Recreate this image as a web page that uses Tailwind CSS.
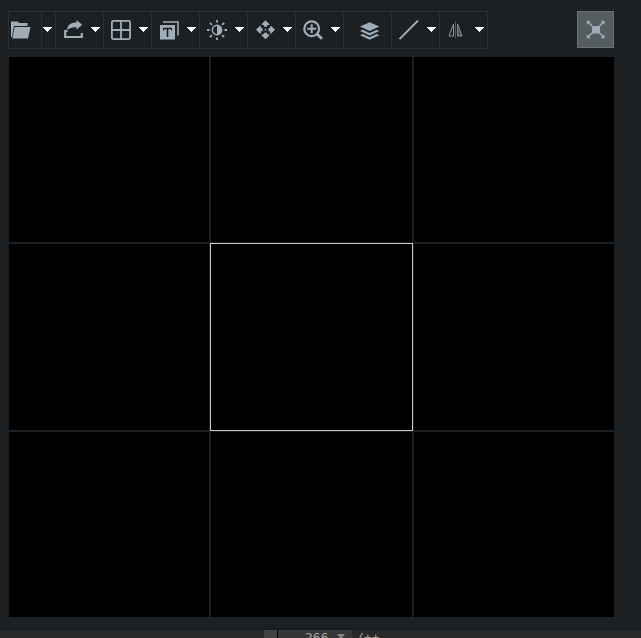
<!DOCTYPE html>
<html lang="en">
<head>
<meta charset="utf-8">
<title>Viewer</title>
<script src="https://cdn.jsdelivr.net/npm/@tailwindcss/browser@4"></script>
</head>
<body class="w-[641px] h-[638px] overflow-hidden bg-[#1c2023] flex flex-col text-[#9fadb8]">
<svg class="hidden"><defs><symbol id="caret" viewBox="0 0 9 5"><path fill="#fff" shape-rendering="crispEdges" d="M0 0h9v1h-1v1h-1v1h-1v1h-1v1h-1v-1h-1v-1h-1v-1h-1v-1h-1z"/></symbol></defs></svg>
<header class="h-[57px] pt-[11px] pl-2 pr-[27px] flex items-start justify-between shrink-0">
  <div class="flex h-[38px] border border-[#2b2f32]">
    <button class="w-[33px] border-r border-[#2b2f32] flex items-center pl-[2px]">
      <svg class="w-5 h-5" viewBox="0 0 20 20" fill="currentColor"><path d="M0 17V1.500h7l1 1.500h8.500v3H3L1 17z"/><path d="M3.700 7H19.500L17 18.500H1.300z"/></svg>
    </button>
    <button class="w-[14px] border-r border-[#2b2f32] flex items-center pl-px"><svg class="w-[9px] h-[5px] mb-px"><use href="#caret"/></svg></button>
    <button class="w-12 border-r border-[#2b2f32] flex items-center gap-[6px] pl-[7px]">
      <svg class="w-[22px] h-5" viewBox="0 0 22 20" fill="currentColor"><path d="M4.500 11H2.200v6h16.600V13" fill="none" stroke="currentColor" stroke-width="2.200"/><path d="M4 10C4.500 4.500 8 2.600 13.500 2.600V0l5.700 4.700-5.700 5V7.300C9.500 7 7 8 4 10z"/></svg>
      <svg class="w-[9px] h-[5px] mb-px"><use href="#caret"/></svg>
    </button>
    <button class="w-12 border-r border-[#2b2f32] flex items-center gap-[7px] pl-[7px]">
      <svg class="w-[21px] h-5" viewBox="0 0 21 20" fill="none" stroke="currentColor" stroke-width="1.800"><rect x="0.900" y="0.900" width="18.200" height="18.200" rx="1.500"/><path d="M10 1v18M1 10h18"/></svg>
      <svg class="w-[9px] h-[5px] mb-px"><use href="#caret"/></svg>
    </button>
    <button class="w-12 border-r border-[#2b2f32] flex items-center gap-[7px] pl-[7px]">
      <svg class="w-[21px] h-5" viewBox="0 0 21 20"><path d="M4 2h15v13.500" fill="none" stroke="currentColor" stroke-width="1.600"/><rect x="1" y="5" width="15" height="14.500" fill="currentColor"/><path d="M4 8.500h9M8.500 8.500v8.500" fill="none" stroke="#1c2023" stroke-width="1.600"/><path d="M4.500 8v2.500M12.500 8v2.500" stroke="#1c2023"/></svg>
      <svg class="w-[9px] h-[5px] mb-px"><use href="#caret"/></svg>
    </button>
    <button class="w-12 border-r border-[#2b2f32] flex items-center gap-[7px] pl-[7px]">
      <svg class="w-[21px] h-5" viewBox="0 0 21 20"><circle cx="10" cy="10" r="4.700" fill="none" stroke="currentColor" stroke-width="1.400"/><path d="M10 5a5 5 0 0 1 0 10z" fill="currentColor"/><path d="M10 0v2.500M10 17.500v2.500M0 10h2.500M17.500 10H20M2.900 2.900l2 2M15.100 15.100l2 2M2.900 17.100l2-2M15.100 4.900l2-2" stroke="currentColor" stroke-width="1.800"/></svg>
      <svg class="w-[9px] h-[5px] mb-px"><use href="#caret"/></svg>
    </button>
    <button class="w-12 border-r border-[#2b2f32] flex items-center gap-[7px] pl-[7px]">
      <svg class="w-[21px] h-5" viewBox="0 0 21 20" fill="currentColor"><path id="arm" d="M10.500 .2L14.300 4v1.100H12.100V6.700H8.900V5.100H6.700V4z"/><use href="#arm" transform="rotate(90 10.500 9.700)"/><use href="#arm" transform="rotate(180 10.500 9.700)"/><use href="#arm" transform="rotate(270 10.500 9.700)"/><rect x="9.700" y="8.900" width="1.600" height="1.600"/></svg>
      <svg class="w-[9px] h-[5px] mb-px"><use href="#caret"/></svg>
    </button>
    <button class="w-12 border-r border-[#2b2f32] flex items-center gap-[7px] pl-[7px]">
      <svg class="w-[21px] h-5" viewBox="0 0 21 20" fill="none" stroke="currentColor"><circle cx="8.700" cy="8.700" r="7.400" stroke-width="2.200"/><path d="M8.700 4.200v9M4.200 8.700h9" stroke-width="2"/><path d="M14 14l5 4.700" stroke-width="2.800"/></svg>
      <svg class="w-[9px] h-[5px] mb-px"><use href="#caret"/></svg>
    </button>
    <button class="w-12 border-r border-[#2b2f32] flex items-center pl-4">
      <svg class="w-[20px] h-5" viewBox="0 0 20 20" fill="currentColor"><path d="M9.700 2.300L19.300 6.500 9.700 11 0 6.500z"/><path d="M0 11l2.700-1.200 7 3.200 7-3.200L19.300 11l-9.600 4.500z"/><path d="M0 15.200l2.700-1.200 7 3.200 7-3.200L19.300 15.200l-9.600 4.500z"/></svg>
    </button>
    <button class="w-12 border-r border-[#2b2f32] flex items-center gap-[7px] pl-[7px]">
      <svg class="w-[21px] h-5" viewBox="0 0 21 20"><path d="M.5 19L19 .5" stroke="currentColor" stroke-width="1.900"/></svg>
      <svg class="w-[9px] h-[5px] mb-px"><use href="#caret"/></svg>
    </button>
    <button class="w-[47px] flex items-center gap-[7px] pl-[7px]">
      <svg class="w-[21px] h-5" viewBox="0 0 21 20"><path d="M6.500 4v12H2z" fill="none" stroke="#89939a"/><path d="M10.500 4v12h4.600z" fill="#50585d" stroke="#7d878e"/><path d="M8.500 1.500v17" stroke="#555c60"/></svg>
      <svg class="w-[9px] h-[5px] mb-px"><use href="#caret"/></svg>
    </button>
  </div>
  <button class="w-[37px] h-[37px] bg-[#545c5f] border border-[#697174] flex items-center justify-center">
    <svg class="w-[19px] h-[19px]" viewBox="0 0 19 19" fill="currentColor"><rect x="6" y="6" width="8" height="7.500"/><path d="M2 2l4 4M17.500 2l-4 4M2 17l4-4M17.500 17l-4-4" stroke="currentColor" stroke-width="1.600"/><path d="M.8.800h4l-4 4zM18.700.800h-4l4 4zM.8 18.200v-4l4 4zM18.700 18.200v-4l-4 4z"/></svg>
  </button>
</header>
<main class="ml-[9px] w-[605px] h-[560px] shrink-0 grid grid-cols-[200px_201px_200px] grid-rows-[185px_186px_185px] gap-[2px] bg-[#1c2023]">
  <div class="bg-black"></div><div class="bg-black"></div><div class="bg-black"></div>
  <div class="bg-black"></div><div class="bg-black outline outline-[#c8c8c8]"></div><div class="bg-black"></div>
  <div class="bg-black"></div><div class="bg-black"></div><div class="bg-black"></div>
</main>
<footer class="mt-3 h-[9px] shrink-0 overflow-hidden border-t border-[#151819] bg-[#292929] flex items-start font-['DejaVu_Sans_Mono',monospace] text-[13px] leading-[16px]">
  <div class="ml-[264px] w-[13px] h-2 bg-[#414343]"></div>
  <div class="w-[75px] h-2 border-l border-black bg-[#353636] flex items-start">
    <span class="ml-[27px] w-6 text-[#a5a5a5]">266</span>
    <svg class="w-2 h-[5px] ml-2 mt-1" viewBox="0 0 8 5"><path d="M0 0h8L4 5z" fill="#888"/></svg>
  </div>
  <span class="ml-[4px] text-[#a39b93]">/++</span>
</footer>
</body>
</html>
